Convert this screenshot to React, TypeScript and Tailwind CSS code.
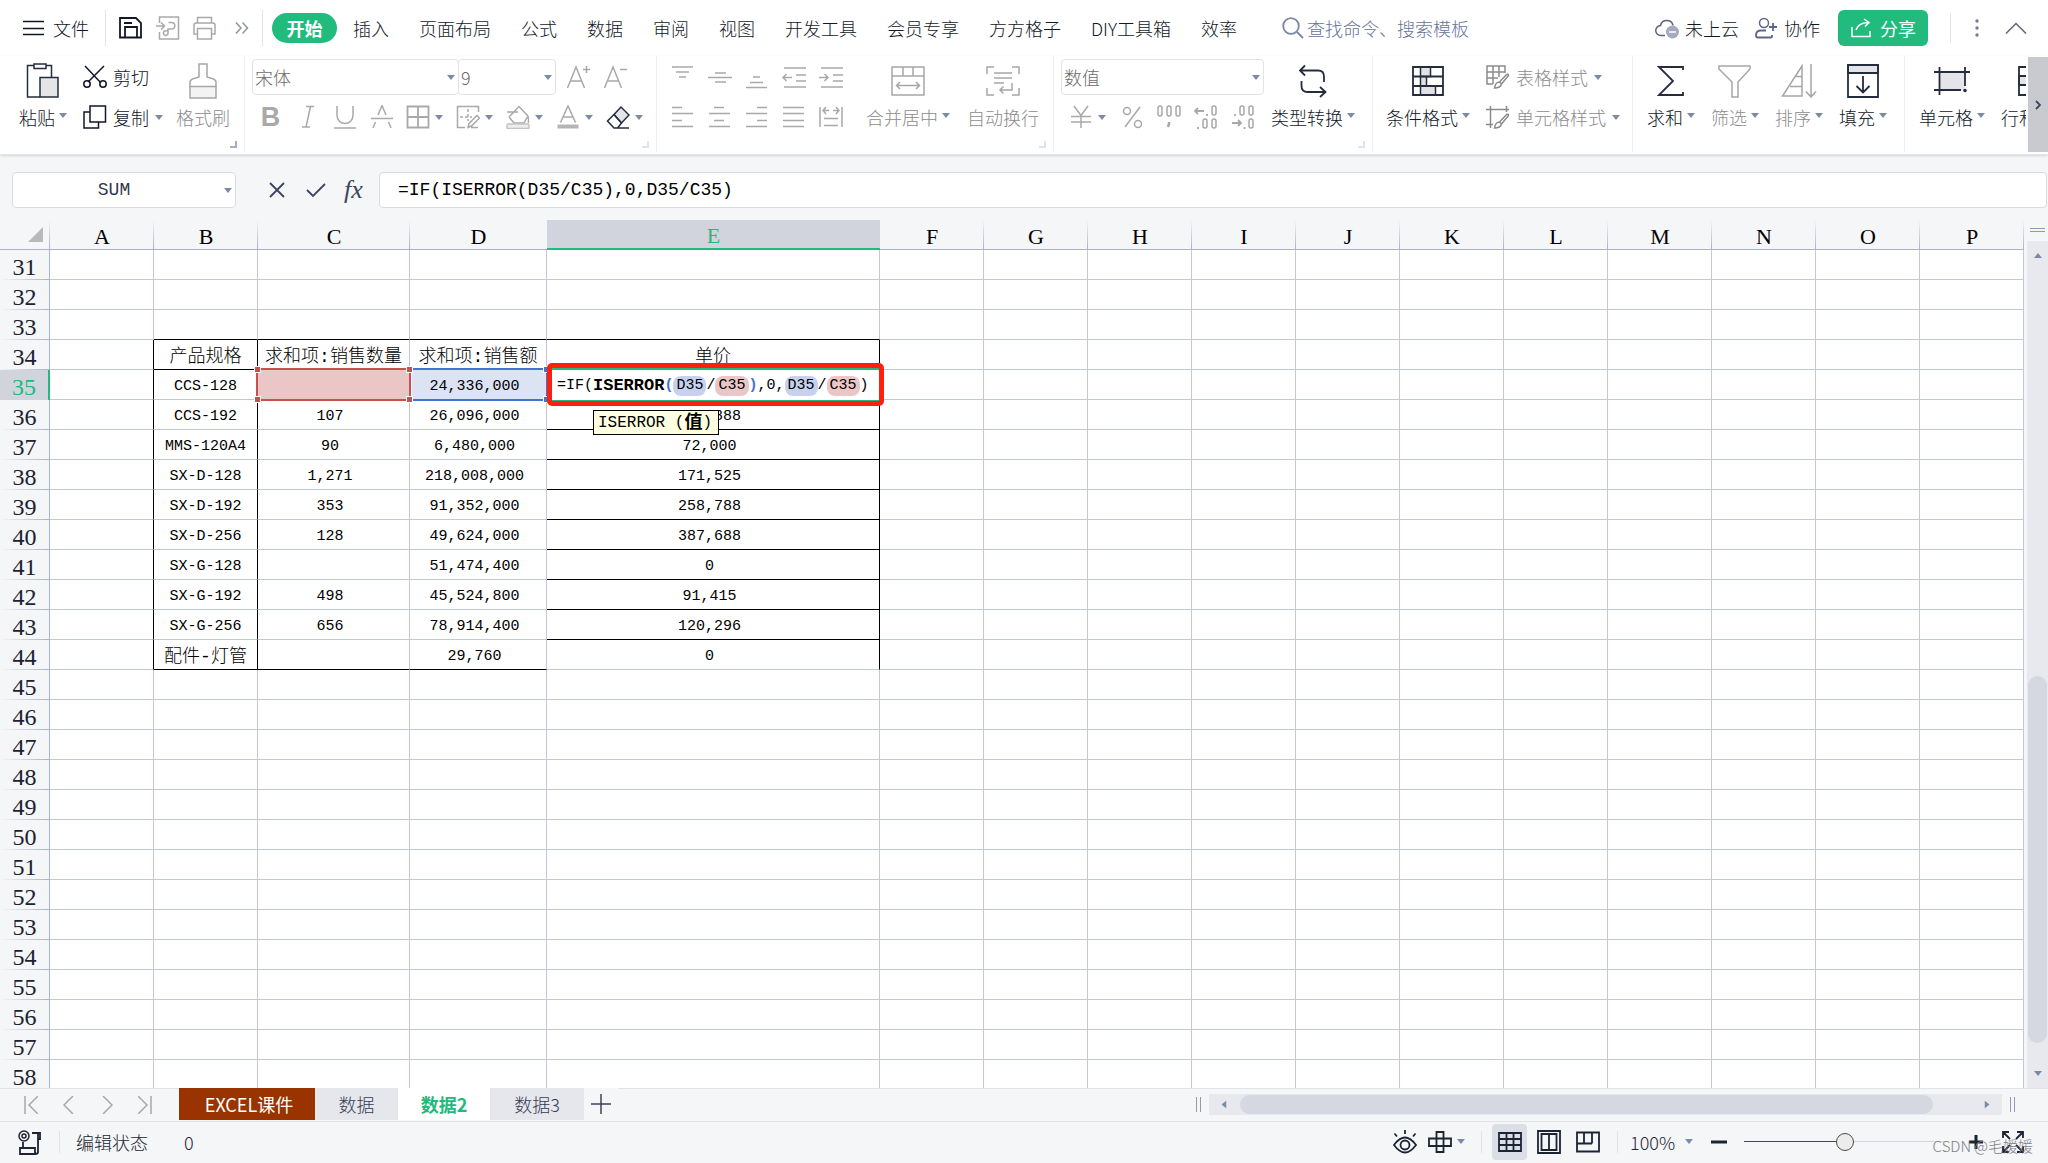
import React from 'react';
import clsx from 'clsx';

/* ---------- shared bits ---------- */

interface IconProps {
  w?: number;
  h?: number;
  className?: string;
  children: React.ReactNode;
}

const Icon: React.FC<IconProps> = ({ w = 24, h = 24, className, children }) => (
  <svg
    width={w}
    height={h}
    viewBox={`0 0 ${w} ${h}`}
    fill="none"
    stroke="currentColor"
    strokeWidth="1.5"
    aria-hidden="true"
    className={clsx('shrink-0', className)}
  >
    {children}
  </svg>
);

const Caret = ({ className }: { className?: string }) => (
  <svg width="8" height="5" viewBox="0 0 8 5" aria-hidden="true" className={clsx('shrink-0 fill-[#7c8aa5]', className)}>
    <path d="M0 0h8L4 5z" />
  </svg>
);

const Divider = ({ className }: { className?: string }) => (
  <span className={clsx('w-px shrink-0 bg-[#e1e3e8]', className)} />
);

interface GroupProps {
  className: string;
  corner?: 'dark' | 'light';
  last?: boolean;
  children: React.ReactNode;
}

const Group: React.FC<GroupProps> = ({ className, corner, last, children }) => (
  <div className={clsx('relative flex h-24 shrink-0 items-start', !last && 'border-r border-[#eeeff2]', className)}>
    {children}
    {corner && (
      <span
        className={clsx(
          'absolute right-[7px] bottom-1 h-[7px] w-[7px] border-r-2 border-b-2',
          corner === 'dark' ? 'border-[#a5aec2]' : 'border-[#dfe4ee]'
        )}
      />
    )}
  </div>
);

interface BigButtonProps {
  label: string;
  className: string;
  disabled?: boolean;
  caret?: boolean;
  children: React.ReactNode;
}

const BigButton: React.FC<BigButtonProps> = ({ label, className, disabled, caret = true, children }) => (
  <button
    type="button"
    className={clsx(
      'flex shrink-0 flex-col items-center pt-[7px] whitespace-nowrap',
      disabled ? 'text-[#8c8c8c]' : 'text-[#111827]',
      className
    )}
  >
    <span className={clsx('flex h-9 items-center', disabled ? 'text-[#a6a6a6]' : 'text-[#242c3d]')}>{children}</span>
    <span className="mt-1 flex h-7 items-center gap-1 leading-7">
      {label}
      {caret && <Caret className="mb-1" />}
    </span>
  </button>
);

const RowButton = ({ label, disabled, caret, children }: { label: string; disabled?: boolean; caret?: boolean; children: React.ReactNode }) => (
  <button
    type="button"
    className={clsx('flex h-10 items-center gap-[6px] whitespace-nowrap', disabled ? 'text-[#8c8c8c]' : 'text-[#111827]')}
  >
    {children}
    {label}
    {caret && <Caret />}
  </button>
);

const Tool = ({ name, children }: { name: string; children: React.ReactNode }) => (
  <button type="button" aria-label={name} className="flex h-10 w-[37px] shrink-0 items-center justify-center text-[#a9a9a9]">
    {children}
  </button>
);

const CaretTool = ({ name, dark, children }: { name: string; dark?: boolean; children: React.ReactNode }) => (
  <button
    type="button"
    aria-label={name}
    className={clsx('flex h-10 w-[50px] shrink-0 items-center gap-[5px] pl-1.5', dark ? 'text-[#242c3d]' : 'text-[#a9a9a9]')}
  >
    {children}
    <Caret />
  </button>
);

const Dropdown = ({ name, value, className }: { name: string; value: string; className: string }) => (
  <div className={clsx('relative flex h-9 shrink-0', className)}>
    <select
      aria-label={name}
      defaultValue={value}
      className="h-full w-full appearance-none rounded-sm border border-[#e2e3e6] bg-white px-0.5 text-lg text-[#6b6b6b] outline-none"
    >
      <option>{value}</option>
    </select>
    <Caret className="pointer-events-none absolute top-4 right-1" />
  </div>
);

/* ---------- menu bar ---------- */

const MENU = ['插入', '页面布局', '公式', '数据', '审阅', '视图', '开发工具', '会员专享', '方方格子', 'DIY工具箱', '效率'];

const MenuBar = () => (
  <header className="flex h-14 shrink-0 items-center bg-white pr-[21px] pl-[23px] whitespace-nowrap text-[#111827]">
    <button type="button" className="flex items-center gap-[9px]">
      <Icon w={21} h={16}>
        <path d="M0 1.500h21M0 8.500h21M0 14.500h21" />
      </Icon>
      文件
    </button>
    <Divider className="ml-4 h-9" />
    <div className="ml-[13px] flex items-center gap-[13px]">
      <button type="button" aria-label="保存">
        <Icon>
          <path d="M1 2h16l5 5v14.500H1z M6 21v-10h12v10 M5 7h8" strokeWidth="1.800" />
        </Icon>
      </button>
      <button type="button" aria-label="输出为PDF" className="text-[#a9a9a9]">
        <Icon>
          <path d="M3.500 7V1h19v22h-19v-7 M0 10h8 M5 6.500L8.500 10 5 13.500 M12.500 6.500h3a3.300 3.300 0 0 1 0 6.600h-3.500v4a2.300 2.300 0 1 1-2.300-2.300h2" />
        </Icon>
      </button>
      <button type="button" aria-label="打印" className="text-[#a9a9a9]">
        <Icon>
          <path d="M4.500 7V1.500h14V7 M4.500 18H1V9.500Q1 7 3 7h17q2 0 2 2.500V18h-3.500 M4.500 12.500h14V23h-14z" />
        </Icon>
      </button>
      <button type="button" aria-label="更多" className="ml-[5px] text-[#8d93a0]">
        <Icon w={14} h={14}>
          <path d="M1 1.500l5 5.500-5 5.500M7.500 1.500l5 5.500-5 5.500" />
        </Icon>
      </button>
    </div>
    <Divider className="ml-[13px] h-9" />
    <nav className="ml-[9px] flex items-center gap-[30px]">
      <button type="button" className="-mr-3.5 h-[30px] w-[65px] rounded-full bg-[#21bb7e] leading-[30px] font-bold text-white">
        开始
      </button>
      {MENU.map((item) => (
        <button key={item} type="button">{item}</button>
      ))}
    </nav>
    <label className="ml-[45px] flex min-w-0 flex-1 items-center gap-[3px] text-[#7986a5]">
      <Icon w={22} h={22}>
        <circle cx="9" cy="9" r="7.800" strokeWidth="1.800" />
        <path d="M15 15l6 6" strokeWidth="1.800" />
      </Icon>
      <input
        aria-label="搜索"
        placeholder="查找命令、搜索模板"
        className="w-full bg-transparent outline-none placeholder:text-[#66749a]"
      />
    </label>
    <div className="flex shrink-0 items-center">
      <button type="button" className="flex items-center gap-1.5">
        <Icon h={22} className="text-[#5b6478]">
          <path d="M10 18.500H6a5 5 0 0 1-.5-10 6.500 6.500 0 0 1 12.600 0" />
          <circle cx="17.500" cy="15" r="6.500" fill="#a3abbf" stroke="none" />
          <path d="M14 15h7" stroke="#fff" />
        </Icon>
        未上云
      </button>
      <button type="button" className="ml-4 flex items-center gap-[7px]">
        <Icon w={22} h={22} className="text-[#5b6785]">
          <circle cx="9" cy="6" r="4.500" />
          <path d="M17 18v1.500q0 1-1 1H3q-2 0-2-2 0-5 5-5h5 M18 6v8M14 10h8" strokeWidth="1.800" />
        </Icon>
        协作
      </button>
      <button type="button" className="ml-[18px] flex h-9 w-[90px] items-center gap-[9px] rounded-md bg-[#21bb7e] pl-[13px] font-normal text-white">
        <Icon w={20} h={20}>
          <path d="M1 9v9.500h18V13 M5 12q2-7 12-7.500 M13 1l5 3.500-4 4" />
        </Icon>
        分享
      </button>
      <Divider className="ml-[22px] h-[30px]" />
      <button type="button" aria-label="更多选项" className="ml-6">
        <svg width="4" height="20" viewBox="0 0 4 20" fill="#767d8c" aria-hidden="true">
          <circle cx="2" cy="3" r="1.700" />
          <circle cx="2" cy="10" r="1.700" />
          <circle cx="2" cy="17" r="1.700" />
        </svg>
      </button>
      <button type="button" aria-label="收起功能区" className="ml-[26px] text-[#5f6675]">
        <Icon w={22} h={12}>
          <path d="M1 11.500L11 1.500l10 10" />
        </Icon>
      </button>
    </div>
  </header>
);

/* ---------- ribbon ---------- */

const ALIGN_TOP: [string, string][] = [
  ['顶端对齐', 'M1 2h21M5 7h13M8 12h7'],
  ['垂直居中', 'M7 8h11M0 12.500h24M7 17h11'],
  ['底端对齐', 'M8 12h7M5 17.500h13M1 22.500h21'],
  ['减少缩进', 'M2 3h22M14 10h10M14 16h10M2 22h22M1 12.500h9M4.500 9L1 12.500l3.500 3.500'],
  ['增加缩进', 'M2 3h22M14 10h10M14 16h10M2 22h22M0 12.500h9M5.500 9l3.500 3.500-3.500 3.500'],
];

const ALIGN_BOTTOM: [string, string][] = [
  ['左对齐', 'M1 2.500h10M1 8.500h21M1 15.500h10M1 21.500h21'],
  ['居中', 'M6 2.500h10M1 8.500h21M6 15.500h10M1 21.500h21'],
  ['右对齐', 'M12 2.500h10M1 8.500h21M12 15.500h10M1 21.500h21'],
  ['两端对齐', 'M1 2.500h21M1 8.500h21M1 15.500h21M1 21.500h21'],
  ['分散对齐', 'M1 2v20M23 2v20M5 13.500h14M5 20.500h14M4 5.500h6M14 5.500h6M7 2L4 5.500 7 9M17 2l3 3.500L17 9'],
];

const Ribbon = () => (
  <div className="flex h-[99px] shrink-0 border-b border-[#e4e5e8] bg-white shadow-sm">
    <div className="flex min-w-0 flex-1 overflow-hidden">
      <Group className="w-[245px] pl-3.5" corner="dark">
        <BigButton label="粘贴" className="w-[58px]">
          <Icon w={34} h={36}>
            <path d="M8 2.500H1.500v31.500H14 M20 2.500h5.500V14 M8 1h12v4.500H8z" />
            <path d="M14 14.500h18v19.500H14z" fill="#e4e5e9" />
          </Icon>
        </BigButton>
        <div className="ml-[11px] w-[90px] pt-px">
          <RowButton label="剪切">
            <Icon>
              <path d="M2 1l16 17M21 1L5 17" />
              <circle cx="4" cy="19" r="3.200" />
              <circle cx="20" cy="19" r="3.200" />
            </Icon>
          </RowButton>
          <RowButton label="复制" caret>
            <Icon>
              <path d="M7 1h15.500v16H7z M7 7H1v16h14.500v-6" />
            </Icon>
          </RowButton>
        </div>
        <BigButton label="格式刷" className="w-[60px]" disabled caret={false}>
          <Icon w={28} h={36}>
            <path d="M1 23.500h26V35H1z" fill="#f3f3f3" />
            <path d="M1 23.500v-4q0-3 4-4l5-1.500V1h8v13l5 1.500q4 1 4 4v4" />
          </Icon>
        </BigButton>
      </Group>

      <Group className="w-[412px] flex-col pt-px pl-[7px]" corner="light">
        <div className="flex h-10 items-center">
          <Dropdown name="字体" value="宋体" className="w-[207px]" />
          <Dropdown name="字号" value="9" className="-ml-px w-[98px]" />
          <div className="ml-[3px] flex">
            <Tool name="增大字号">
              <Icon>
                <path d="M1.500 23L10 2l8.500 21M5 16h10M17 4.500h7M20.500 1v7" />
              </Icon>
            </Tool>
            <Tool name="减小字号">
              <Icon>
                <path d="M1.500 23L10 2l8.500 21M5 16h10M17 4.500h7" />
              </Icon>
            </Tool>
          </div>
        </div>
        <div className="flex">
          <Tool name="加粗">
            <span className="font-['Liberation_Sans',sans-serif] text-[27px] leading-8 font-bold">B</span>
          </Tool>
          <Tool name="倾斜">
            <Icon w={14}>
              <path d="M5 1.500h8M1 22h8M9.500 1.500L5 22" />
            </Icon>
          </Tool>
          <Tool name="下划线">
            <Icon>
              <path d="M4 1v9.500a8 8 0 0 0 16 0V1M1 23h22" />
            </Icon>
          </Tool>
          <Tool name="删除线">
            <Icon>
              <path d="M8 10l4-9.500L16 10M5.500 17L3 23M18.500 17l2.500 6M1 13.500h22" />
            </Icon>
          </Tool>
          <CaretTool name="边框">
            <Icon>
              <path d="M1.500 1.500h21v21h-21zM12 1.500v21M1.500 12h21" strokeWidth="1.800" />
            </Icon>
          </CaretTool>
          <CaretTool name="绘图边框">
            <Icon>
              <path d="M9 22.500H1.500v-21h21V7M12 22.500l1-4 8-8 2.500 2.500-8 8zM15 22.500h7" />
              <path d="M12 4v12M4 12h12" strokeDasharray="3 2" />
            </Icon>
          </CaretTool>
          <CaretTool name="填充颜色">
            <Icon>
              <path d="M3 12L13 1.500 22 11q1 6 0 7M3 12l5 6h10l4-7M1 7h11" />
              <rect x="1" y="19" width="22" height="4.500" rx="1" fill="#ededed" stroke="#c4c4c4" />
            </Icon>
          </CaretTool>
          <CaretTool name="字体颜色">
            <Icon>
              <path d="M4.500 17.500L12 1l7.500 16.500M7.500 12h9" />
              <path d="M1.500 21.500h21" stroke="#b5b5b5" strokeWidth="4" />
            </Icon>
          </CaretTool>
          <CaretTool name="清除" dark>
            <Icon>
              <path d="M8 9.500L15 2l8 8-7.500 8z" fill="#e4e5e9" />
              <path d="M8 9.500L1.500 16l6.500 7h15M8 9.500l7.500 8.500-4 5" />
            </Icon>
          </CaretTool>
        </div>
      </Group>

      <Group className="w-[397px] pl-[7px]" corner="light">
        <div className="pt-px">
          <div className="flex">
            {ALIGN_TOP.map(([name, d]) => (
              <Tool key={name} name={name}>
                <Icon><path d={d} /></Icon>
              </Tool>
            ))}
          </div>
          <div className="flex">
            {ALIGN_BOTTOM.map(([name, d]) => (
              <Tool key={name} name={name}>
                <Icon><path d={d} /></Icon>
              </Tool>
            ))}
          </div>
        </div>
        <BigButton label="合并居中" className="ml-[9px] w-[100px]" disabled>
          <Icon w={34} h={30}>
            <path d="M1 1h32v28H1zM1 10h32M12 1v9M22 1v9M6 19.500h22M9 16l-3.500 3.500L9 23M25 16l3.500 3.500L25 23" />
          </Icon>
        </BigButton>
        <BigButton label="自动换行" className="w-[90px]" disabled caret={false}>
          <Icon w={34} h={30}>
            <path d="M8 1H1v7M26 1h7v7M1 22v7h7M33 22v7h-7M8 7h18M8 12h18M8 17h10M26 17v7H14M17.500 20.500L14 24l3.500 3.500" />
          </Icon>
        </BigButton>
      </Group>

      <Group className="w-[319px] pl-[7px]" corner="light">
        <div className="pt-px">
          <div className="flex h-10 items-center">
            <Dropdown name="数字格式" value="数值" className="w-[203px]" />
          </div>
          <div className="ml-0.5 flex">
            <CaretTool name="货币格式">
              <Icon>
                <path d="M5 1l7 9.500L19 1M12 10.500V23M2 11.500h20M2 17h20" />
              </Icon>
            </CaretTool>
            <Tool name="百分比样式">
              <Icon>
                <circle cx="7" cy="6" r="3.500" />
                <circle cx="18" cy="19" r="3.500" />
                <path d="M20 2L5 22" />
              </Icon>
            </Tool>
            <Tool name="千位分隔样式">
              <Icon>
                <rect x="1" y="1" width="4" height="10" rx="2" />
                <rect x="10" y="1" width="4" height="10" rx="2" />
                <rect x="19" y="1" width="4" height="10" rx="2" />
                <path d="M12 17v2l-1 3" strokeWidth="2.500" />
              </Icon>
            </Tool>
            <Tool name="增加小数位数">
              <Icon>
                <path d="M1 6h9M4 3L1 6l3 3M13 9v2M4 22v2" strokeWidth="1.800" />
                <rect x="18" y="1" width="4" height="9" rx="2" />
                <rect x="9" y="14" width="4" height="9" rx="2" />
                <rect x="18" y="14" width="4" height="9" rx="2" />
              </Icon>
            </Tool>
            <Tool name="减少小数位数">
              <Icon>
                <path d="M1 18h9M7 15l3 3-3 3M13.500 22v2M4 9v2" strokeWidth="1.800" />
                <rect x="9" y="1" width="4" height="9" rx="2" />
                <rect x="18" y="1" width="4" height="9" rx="2" />
                <rect x="18" y="14" width="4" height="9" rx="2" />
              </Icon>
            </Tool>
          </div>
        </div>
        <BigButton label="类型转换" className="ml-px w-[96px]">
          <Icon w={28} h={34}>
            <path d="M1 6.500h18q6 0 6 6V18M6 1.500L1 6.500l5 5M2.500 17v5q0 6 6 6H26M21 23l5.500 5-5.500 5" strokeWidth="1.800" />
          </Icon>
        </BigButton>
      </Group>

      <Group className="w-[260px] pl-[7px]">
        <BigButton label="条件格式" className="w-[96px]">
          <Icon w={32} h={30}>
            <path d="M8.500 1h10v9.500h-10zM8.500 10.500h6v9.500h-6zM8.500 20h15v9h-15z" fill="#e1e2e6" />
            <path d="M1 1h30v28H1zM1 10.500h30M1 20h30" strokeWidth="1.800" />
          </Icon>
        </BigButton>
        <div className="ml-2.5 pt-px">
          <RowButton label="表格样式" disabled caret>
            <Icon>
              <path d="M7 19H1V1h18v7M1 7h18M1 13h11M7 1v18M13 1v11M13.500 17l7-7.500q2-1 2 1L15.500 19M13.500 17q-4 0-5 6 6 0 7-4z" />
            </Icon>
          </RowButton>
          <RowButton label="单元格样式" disabled caret>
            <Icon>
              <path d="M0 4.500h23M4.500 1v22M0 19.500h7M20.500 1v6M13.500 17l7-7.500q2-1 2 1L15.500 19M13.500 17q-4 0-5 6 6 0 7-4z" />
            </Icon>
          </RowButton>
        </div>
      </Group>

      <Group className="w-[272px] pl-1.5">
        <BigButton label="求和" className="w-16">
          <Icon w={28} h={32}>
            <path d="M26 5V2H2l14 14L2 30h24v-3" strokeWidth="1.800" />
          </Icon>
        </BigButton>
        <BigButton label="筛选" className="w-16" disabled>
          <Icon w={34} h={34}>
            <path d="M1 2h31v3L20 18v15h-6V18L1 5z" />
          </Icon>
        </BigButton>
        <BigButton label="排序" className="w-16" disabled>
          <Icon w={36} h={34}>
            <path d="M21 2L1.500 32H21zM15 12.500h6M9 22.500h12M30 0v33M25 27.500l5 5.500 5-5.500" />
          </Icon>
        </BigButton>
        <BigButton label="填充" className="w-16">
          <Icon w={32} h={34}>
            <path d="M1 1h30v8H1z" fill="#e4e5e9" />
            <path d="M1 1h30v32H1zM1 9h30M16 12v16M9.500 22l6.500 6.500 6.500-6.500" strokeWidth="1.800" />
          </Icon>
        </BigButton>
      </Group>

      <Group className="pl-2" last>
        <BigButton label="单元格" className="w-[78px]">
          <Icon w={36} h={30}>
            <path d="M5 6h26v18H5z" fill="#e4e5e9" stroke="none" />
            <path d="M0 6h36M0 24h27M5.500 1v28M31 1v19" strokeWidth="1.800" />
            <circle cx="31" cy="24.500" r="1.800" fill="currentColor" stroke="none" />
          </Icon>
        </BigButton>
        <BigButton label="行和列" className="ml-1 w-[78px]">
          <Icon w={32} h={30}>
            <path d="M1 10h30v9H1z" fill="#e4e5e9" />
            <path d="M1 1h30v28H1zM1 10h30M1 19h30" strokeWidth="1.800" />
          </Icon>
        </BigButton>
      </Group>
    </div>
    <button
      type="button"
      aria-label="向右滚动"
      className="mt-px ml-0.5 flex h-[95px] w-5 shrink-0 items-center justify-center bg-[#c9cacf] text-[#40475a]"
    >
      <Icon w={6} h={10}>
        <path d="M1 1l4 4-4 4" strokeWidth="1.800" />
      </Icon>
    </button>
  </div>
);

/* ---------- formula bar ---------- */

const FormulaBar = () => (
  <div className="flex h-[65px] shrink-0 pt-[17px] pr-px pl-3 text-[#3b4560]">
    <div className="relative w-56 shrink-0">
      <input
        aria-label="名称框"
        defaultValue="SUM"
        className="h-9 w-full rounded border border-[#d9dbe0] bg-white pr-5 text-center font-['Liberation_Mono','Noto_Sans_CJK_SC',monospace] text-lg text-[#30394d] outline-none"
      />
      <Caret className="absolute top-4 right-1" />
    </div>
    <div className="flex h-9 w-[143px] shrink-0 items-center pl-[31px]">
      <button type="button" aria-label="取消" className="w-5">
        <Icon w={20} h={20}>
          <path d="M3 3l14 14M17 3L3 17" strokeWidth="1.800" />
        </Icon>
      </button>
      <button type="button" aria-label="输入" className="ml-[19px] w-5">
        <Icon w={20} h={20}>
          <path d="M1 10l6 6L19 4" strokeWidth="1.800" />
        </Icon>
      </button>
      <button type="button" aria-label="插入函数" className="ml-[18px] font-['Liberation_Serif',serif] text-[26px] leading-9 italic">
        fx
      </button>
    </div>
    <input
      aria-label="编辑栏"
      defaultValue="=IF(ISERROR(D35/C35),0,D35/C35)"
      className="h-9 min-w-0 flex-1 rounded border border-[#d9dbe0] bg-white px-[18px] font-['Liberation_Mono','Noto_Sans_CJK_SC',monospace] text-lg text-black outline-none"
    />
  </div>
);

/* ---------- sheet ---------- */

const COLUMNS = 'ABCDEFGHIJKLMNOP'.split('');
const ROWS = Array.from({ length: 28 }, (_, i) => 31 + i);

const COL_WIDTH: Record<string, string> = {
  C: 'w-[152px]',
  D: 'w-[137px]',
  E: 'w-[333px]',
  P: '',
};

const DATA: Record<number, string[]> = {
  34: ['产品规格', '求和项:销售数量', '求和项:销售额', '单价'],
  35: ['CCS-128', '', '24,336,000', ''],
  36: ['CCS-192', '107', '26,096,000', '243,888'],
  37: ['MMS-120A4', '90', '6,480,000', '72,000'],
  38: ['SX-D-128', '1,271', '218,008,000', '171,525'],
  39: ['SX-D-192', '353', '91,352,000', '258,788'],
  40: ['SX-D-256', '128', '49,624,000', '387,688'],
  41: ['SX-G-128', '', '51,474,400', '0'],
  42: ['SX-G-192', '498', '45,524,800', '91,415'],
  43: ['SX-G-256', '656', '78,914,400', '120,296'],
  44: ['配件-灯管', '', '29,760', '0'],
};

const blackRight = (col: string, row: number) => row >= 34 && row <= 44 && 'ABE'.includes(col);

const blackBottom = (col: string, row: number) => {
  if (row === 33) return 'BCDE'.includes(col);
  if (row === 34) return col === 'B';
  if (row === 44) return 'BCD'.includes(col);
  return col === 'E' && row >= 36 && row <= 43;
};

const Handle = ({ className }: { className: string }) => (
  <span className={clsx('absolute h-[7px] w-[7px] border border-white', className)} />
);

const RedRange = () => (
  <div className="absolute -inset-x-[2px] -top-[2px] -bottom-[2px] z-20 border-2 border-[#c8504d] bg-[#ebc6c6] outline outline-white">
    <Handle className="-top-1 -left-1 bg-[#c8504d]" />
    <Handle className="-top-1 -right-1 bg-[#c8504d]" />
    <Handle className="-bottom-1 -left-1 bg-[#c8504d]" />
    <Handle className="-right-1 -bottom-1 bg-[#c8504d]" />
  </div>
);

const BlueRange = () => (
  <div className="absolute -inset-x-[2px] -top-[2px] -bottom-[2px] z-10 border-2 border-[#4571d4] bg-[#dce3f5] outline outline-white">
    <Handle className="-top-1 -right-1 bg-[#4571d4]" />
    <Handle className="-right-1 -bottom-1 bg-[#4571d4]" />
  </div>
);

const Ref = ({ tone, children }: { tone: 'blue' | 'red'; children: React.ReactNode }) => (
  <span className={clsx('h-5 rounded-lg px-[3px] leading-5', tone === 'blue' ? 'bg-[#c5d1ef]' : 'bg-[#ebc6c6]')}>
    {children}
  </span>
);

const CellEditor = () => (
  <>
    <div className="absolute -top-[7px] -right-[5px] -bottom-[7px] left-0 z-30 rounded-[5px] border-[5px] border-[#fe1f0f] bg-white">
      <div className="flex h-full items-center border-t-2 border-b border-[#22b97c] pt-0.5 pl-[5px] text-left font-normal text-black">
        =IF(<b className="text-[17px] font-bold">ISERROR</b>
        <b className="font-bold text-[#4571d4]">(</b>
        <Ref tone="blue">D35</Ref>/<Ref tone="red">C35</Ref>
        <b className="font-bold text-[#4571d4]">)</b>,0,
        <Ref tone="blue">D35</Ref>/<Ref tone="red">C35</Ref>)
      </div>
    </div>
    <div className="absolute top-10 left-[46px] z-40 flex h-[25px] w-[126px] items-center border border-black bg-[#ffffe1] pl-1 text-base text-black">
      ISERROR&nbsp;(<b className="text-lg leading-6 font-bold">值</b>)
    </div>
  </>
);

const Sheet = () => (
  <div className="min-w-0 flex-1 overflow-hidden bg-white">
    <table className="w-full table-fixed border-separate border-spacing-0 font-['Liberation_Mono','Noto_Sans_CJK_SC',monospace]">
      <colgroup>
        <col className="w-[50px]" />
        {COLUMNS.map((c) => (
          <col key={c} className={COL_WIDTH[c] ?? 'w-[104px]'} />
        ))}
      </colgroup>
      <thead>
        <tr className="h-[30px] bg-[#f5f6f8] font-['Liberation_Serif',serif] text-[22px] leading-6 text-black">
          <th className="h-[30px] border-b border-[#a9b2c6] bg-[linear-gradient(to_bottom,#f5f6f8,#a9b2c6)] bg-[length:1px_100%] bg-right bg-no-repeat p-0">
            <svg width="15" height="15" viewBox="0 0 15 15" className="ml-7 fill-[#b9b9b9]" aria-hidden="true">
              <path d="M15 0v15H0z" />
            </svg>
          </th>
          {COLUMNS.map((c) => (
            <th
              key={c}
              scope="col"
              className={clsx(
                'h-[30px] p-0 pt-1 font-normal',
                c === 'E'
                  ? 'border-b-2 border-[#21bb7e] bg-[#d1d4dc] text-[#22b97c]'
                  : 'border-b border-[#a9b2c6] bg-[length:1px_100%] bg-right bg-no-repeat',
                c !== 'E' && c !== 'D' && 'bg-[linear-gradient(to_bottom,#f5f6f8,#a9b2c6)]'
              )}
            >
              {c}
            </th>
          ))}
        </tr>
      </thead>
      <tbody>
        {ROWS.map((row) => (
          <tr key={row} className="h-[30px]">
            <th
              scope="row"
              className={clsx(
                "h-[30px] p-0 pt-1 font-['Liberation_Serif',serif] text-2xl leading-6 font-normal",
                row === 35
                  ? 'border-r-2 border-[#21bb7e] bg-[#d1d4dc] text-[#22b97c]'
                  : 'border-r border-[#a9b2c6] bg-[#f5f6f8] bg-[linear-gradient(to_right,#f5f6f8,#a9b2c6)] bg-[length:100%_1px] bg-bottom bg-no-repeat text-[#1c2230]'
              )}
            >
              {row}
            </th>
            {COLUMNS.map((c, i) => {
              const text = DATA[row]?.[i - 1] ?? '';
              const numeric = row > 34 && 'CDE'.includes(c);
              return (
                <td
                  key={c}
                  className={clsx(
                    'relative h-[30px] border-r border-b p-0 pt-1 text-center leading-6 whitespace-nowrap text-black',
                    blackRight(c, row) ? 'border-r-black' : 'border-r-[#c3c8d9]',
                    blackBottom(c, row) ? 'border-b-black' : 'border-b-[#c3c8d9]',
                    numeric && 'pr-[7px]',
                    /[\u4e00-\u9fff]/.test(text) ? 'text-lg leading-6' : 'text-[15px]'
                  )}
                >
                  {row === 35 && c === 'C' && <RedRange />}
                  {row === 35 && c === 'D' && <BlueRange />}
                  {row === 35 && c === 'E' && <CellEditor />}
                  {row === 35 && c === 'D' ? <span className="relative z-10">{text}</span> : text}
                </td>
              );
            })}
          </tr>
        ))}
      </tbody>
    </table>
  </div>
);

const VerticalScroll = () => (
  <div className="flex w-6 shrink-0 flex-col pl-[3px]">
    <div className="flex h-[21px] shrink-0 flex-col items-center justify-end gap-0.5 pb-[9px]">
      <span className="h-px w-[15px] bg-[#8f9bb3]" />
      <span className="h-px w-[15px] bg-[#8f9bb3]" />
    </div>
    <div className="flex flex-1 flex-col items-center bg-[#e8e9ef] py-3">
      <Caret className="rotate-180" />
      <div className="flex min-h-0 w-full flex-1 flex-col px-px pt-[418px] pb-[28px]">
        <div className="flex-1 rounded-full bg-[#d5d8e1]" />
      </div>
      <Caret />
    </div>
  </div>
);

/* ---------- sheet tabs and horizontal scroll ---------- */

const NAV: [string, string][] = [
  ['第一张', 'M1 0v18M14 0L5 9l9 9'],
  ['上一张', 'M11 0L2 9l9 9'],
  ['下一张', 'M3 0l9 9-9 9'],
  ['最后一张', 'M0 0l9 9-9 9M13 0v18'],
];

const Grip = () => <span className="h-[15px] w-[5px] shrink-0 border-x border-[#8f9bb3]" />;

const TabBar = () => (
  <div className="flex h-[34px] shrink-0 items-start border-b border-[#e1e3e9]">
    <div className="flex h-8 w-[179px] shrink-0 items-center gap-6 border-t border-[#e1e3e9] pl-6 text-[#a8a8a8]">
      {NAV.map(([name, d]) => (
        <button key={name} type="button" aria-label={name}>
          <Icon w={14} h={18}><path d={d} /></Icon>
        </button>
      ))}
    </div>
    <button type="button" className="h-8 w-[136px] shrink-0 bg-[#993300] pl-1 font-normal text-white">EXCEL课件</button>
    <button type="button" className="h-8 w-[83px] shrink-0 bg-[#e6e7ed] text-[#343c52]">数据</button>
    <button type="button" className="h-8 w-[92px] shrink-0 bg-white font-bold text-[#22b97c]">数据2</button>
    <button type="button" className="h-8 w-[94px] shrink-0 bg-[#e6e7ed] text-[#343c52]">数据3</button>
    <button type="button" aria-label="新建工作表" className="flex h-8 w-[34px] shrink-0 items-center justify-center text-[#3a4358]">
      <Icon w={20} h={20}><path d="M10 0v20M0 10h20" /></Icon>
    </button>
    <div className="flex h-8 min-w-0 flex-1 items-center gap-2 border-t border-[#e1e3e9] pr-[33px] pl-[578px]">
      <Grip />
      <div className="flex h-[21px] flex-1 items-center bg-[#e8e9ef] px-[11px]">
        <Caret className="rotate-90" />
        <div className="ml-3 h-[19px] flex-1 rounded-full bg-[#d5d8e1]" />
        <Caret className="ml-[50px] -rotate-90" />
      </div>
      <Grip />
    </div>
  </div>
);

/* ---------- status bar ---------- */

const StatusBar = () => (
  <footer className="relative flex h-[41px] shrink-0 items-center pr-6 pb-0.5 pl-[18px] text-[#1c2433]">
    <button type="button" aria-label="宏录制">
      <Icon h={26}>
        <circle cx="6" cy="7" r="5" />
        <circle cx="6" cy="7" r="2" />
        <path d="M14 4h8v6h-2M20 4v19q0 2-3 2M5 13v6M2 19h15v6H2z" strokeWidth="1.800" />
      </Icon>
    </button>
    <Divider className="ml-[17px] h-[22px]" />
    <span className="ml-4">编辑状态</span>
    <span className="ml-9">0</span>
    <div className="ml-auto flex items-center">
      <button type="button" aria-label="护眼模式">
        <Icon>
          <path d="M1 15q11-15 22 0-11 15-22 0zM12 0v4M1.500 3.500L4 6.500M22.500 3.500L20 6.500" strokeWidth="1.800" />
          <circle cx="12" cy="15" r="4.500" strokeWidth="1.800" />
        </Icon>
      </button>
      <button type="button" aria-label="阅读模式" className="ml-[11px] flex items-center gap-[5px]">
        <Icon>
          <path d="M8.500 2h7v20h-7zM1 8.500h22v7.500H1z" strokeWidth="1.800" />
        </Icon>
        <Caret />
      </button>
      <Divider className="ml-4 h-[22px]" />
      <button type="button" aria-label="普通视图" className="ml-2.5 flex h-9 w-[35px] items-center justify-center rounded bg-[#dadee6]">
        <Icon>
          <path d="M1 3h22v18H1zM1 9h22M1 15h22M8.500 3v18M15.500 3v18" strokeWidth="1.800" />
        </Icon>
      </button>
      <button type="button" aria-label="分页预览" className="ml-2.5">
        <Icon>
          <path d="M1 1h22v22H1zM4.500 4h15v16h-15zM12 4v16" strokeWidth="1.800" />
        </Icon>
      </button>
      <button type="button" aria-label="页面布局" className="ml-[15px]">
        <Icon>
          <path d="M1 2.500h22v19H1zM8 2.500v11M1 13.500h15M16 2.500v11" strokeWidth="1.800" />
        </Icon>
      </button>
      <Divider className="ml-[17px] h-[22px]" />
      <button type="button" className="ml-3 flex w-[63px] items-center justify-between">
        100%
        <Caret />
      </button>
      <button type="button" aria-label="缩小" className="ml-[18px]">
        <Icon w={16} h={16}><path d="M0 8h16" strokeWidth="3" /></Icon>
      </button>
      <input
        type="range"
        aria-label="显示比例"
        defaultValue={50}
        className="ml-[17px] h-[18px] w-[202px] appearance-none bg-[linear-gradient(to_right,#3f4961_50%,#d3d6de_50%)] bg-[length:100%_1px] bg-center bg-no-repeat [&::-webkit-slider-thumb]:h-[18px] [&::-webkit-slider-thumb]:w-[18px] [&::-webkit-slider-thumb]:appearance-none [&::-webkit-slider-thumb]:rounded-full [&::-webkit-slider-thumb]:border [&::-webkit-slider-thumb]:border-[#4a4a4a] [&::-webkit-slider-thumb]:bg-[#ececec]"
      />
      <button type="button" aria-label="放大" className="ml-[22px]">
        <Icon w={16} h={16}><path d="M1 8h14M8 1v14" strokeWidth="3" /></Icon>
      </button>
      <button type="button" aria-label="全屏显示" className="ml-[18px]">
        <Icon w={22} h={22}>
          <path d="M1 7V1h6M15 1h6v6M21 15v6h-6M7 21H1v-6M1 1l7 7M21 1l-7 7M21 21l-7-7M1 21l7-7" strokeWidth="1.800" />
        </Icon>
      </button>
    </div>
    <span className="absolute right-[15px] bottom-1.5 text-[15px] text-[#7d8086]">CSDN @毛媛媛</span>
  </footer>
);

export default function App() {
  return (
    <div className="flex h-screen flex-col overflow-hidden bg-[#f5f6f8] font-['Noto_Sans_CJK_SC',sans-serif] text-lg font-light">
      <MenuBar />
      <Ribbon />
      <FormulaBar />
      <main className="flex min-h-0 flex-1">
        <Sheet />
        <VerticalScroll />
      </main>
      <TabBar />
      <StatusBar />
    </div>
  );
}
